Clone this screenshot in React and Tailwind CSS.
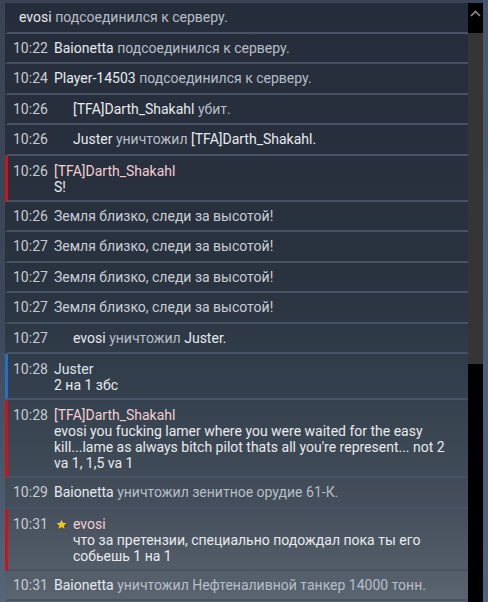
const rows = [
  { kind: 'sys', time: null, name: 'evosi', text: 'подсоединился к серверу.' },
  { kind: 'sys', time: '10:22', name: 'Baionetta', text: 'подсоединился к серверу.' },
  { kind: 'sys', time: '10:24', name: 'Player-14503', text: 'подсоединился к серверу.' },
  { kind: 'kill', time: '10:26', name: '[TFA]Darth_Shakahl', text: 'убит.' },
  { kind: 'kill', time: '10:26', name: 'Juster', text: 'уничтожил', after: '[TFA]Darth_Shakahl.' },
  { kind: 'chat', team: 'red', time: '10:26', name: '[TFA]Darth_Shakahl', lines: ['S!'] },
  { kind: 'plain', time: '10:26', text: 'Земля близко, следи за высотой!' },
  { kind: 'plain', time: '10:27', text: 'Земля близко, следи за высотой!' },
  { kind: 'plain', time: '10:27', text: 'Земля близко, следи за высотой!' },
  { kind: 'plain', time: '10:27', text: 'Земля близко, следи за высотой!' },
  { kind: 'kill', time: '10:27', name: 'evosi', text: 'уничтожил', after: 'Juster.' },
  { kind: 'chat', team: 'blue', time: '10:28', name: 'Juster', lines: ['2 на 1 збс'] },
  {
    kind: 'chat', team: 'red', time: '10:28', name: '[TFA]Darth_Shakahl',
    lines: [
      'evosi you fucking lamer where you were waited for the easy',
      "kill...lame as always bitch pilot thats all you're represent... not 2",
      'va 1, 1,5 va 1',
    ],
  },
  { kind: 'sys', time: '10:29', name: 'Baionetta', text: 'уничтожил зенитное орудие 61-К.' },
  { kind: 'chat', team: 'red', star: true, time: '10:31', name: 'evosi', lines: ['что за претензии, специально подождал пока ты его', 'собьешь 1 на 1'] },
  { kind: 'sys', time: '10:31', name: 'Baionetta', text: 'уничтожил Нефтеналивной танкер 14000 тонн.' },
];

function Star() {
  return (
    <svg width="11" height="11" viewBox="0 0 24 24" className="mt-[3px]">
      <path d="M12 1.5l3.1 6.9 7.4.7-5.6 5 1.7 7.4L12 17.6l-6.6 3.9 1.7-7.4-5.6-5 7.4-.7z" fill="#f5c518" />
    </svg>
  );
}

function Row({ r }) {
  const bar =
    r.team === 'red' ? 'border-[#c8141e]' : r.team === 'blue' ? 'border-[#2a6fbf]' : 'border-transparent';
  const spacing = r.kind === 'chat' ? 'pt-[7px] pb-[5px] leading-[16px]' : 'pt-[7px] pb-[6px] leading-[15.5px]';
  return (
    <div className={`flex border-l-[3px] ${bar} border-b-2 border-b-[#475264] ${spacing}`}>
      {r.time ? (
        <div className="w-[46px] shrink-0 pl-[5px] text-[#c6cbd2]">{r.time}</div>
      ) : (
        <div className="w-[11px] shrink-0" />
      )}
      {r.kind === 'sys' && (
        <div>
          <span className="text-[#e6e9ee]">{r.name}</span>{' '}
          <span className="text-[#b7bec8]">{r.text}</span>
        </div>
      )}
      {r.kind === 'kill' && (
        <div className="pl-[19px]">
          <span className="text-[#e6e9ee]">{r.name}</span>{' '}
          <span className="text-[#b7bec8]">{r.text}</span>
          {r.after && <span className="text-[#e6e9ee]"> {r.after}</span>}
        </div>
      )}
      {r.kind === 'plain' && <div className="text-[#c9ced6]">{r.text}</div>}
      {r.kind === 'chat' && (
        <div className="flex">
          {r.star && (
            <div className="w-[19px] pl-[2px]">
              <Star />
            </div>
          )}
          <div>
            <div className={r.team === 'blue' ? 'text-[#dbe5f1]' : 'text-[#f3cdd3]'}>{r.name}</div>
            {r.lines.map((l, i) => (
              <div key={i} className="text-[#e8eaee]">{l}</div>
            ))}
          </div>
        </div>
      )}
    </div>
  );
}

export default function App() {
  return (
    <div
      className="w-[488px] h-[602px] overflow-hidden flex bg-[linear-gradient(180deg,#3a4454_0%,#3c4759_50%,#55657a_100%)] text-[14px]"
      style={{ fontFamily: 'Roboto, "Noto Sans", sans-serif' }}
    >
      <div className="w-[5px] shrink-0" />
      <div className="flex-1 pt-[3px] flex flex-col">
        <div className="flex-1 bg-[linear-gradient(180deg,#262d3a_0%,#29323f_45%,#34404d_65%,#45505c_85%,#5a6570_100%)]">
          {rows.map((r, i) => (
            <Row key={i} r={r} />
          ))}
        </div>
      </div>
      <div className="w-[15px] shrink-0 pt-[3px] flex flex-col">
        <div className="h-[30px] bg-black flex items-start justify-center pt-[7px]">
          <svg width="11" height="7" viewBox="0 0 11 7">
            <path d="M1 6l4.5-4.5L10 6" stroke="#8c8c8c" strokeWidth="1.6" fill="none" />
          </svg>
        </div>
        <div className="h-[331px] bg-[#363434]" />
        <div className="flex-1 bg-black" />
      </div>
      <div className="w-[5px] shrink-0 bg-[linear-gradient(180deg,#465670_0%,#4d6180_100%)]" />
    </div>
  );
}
